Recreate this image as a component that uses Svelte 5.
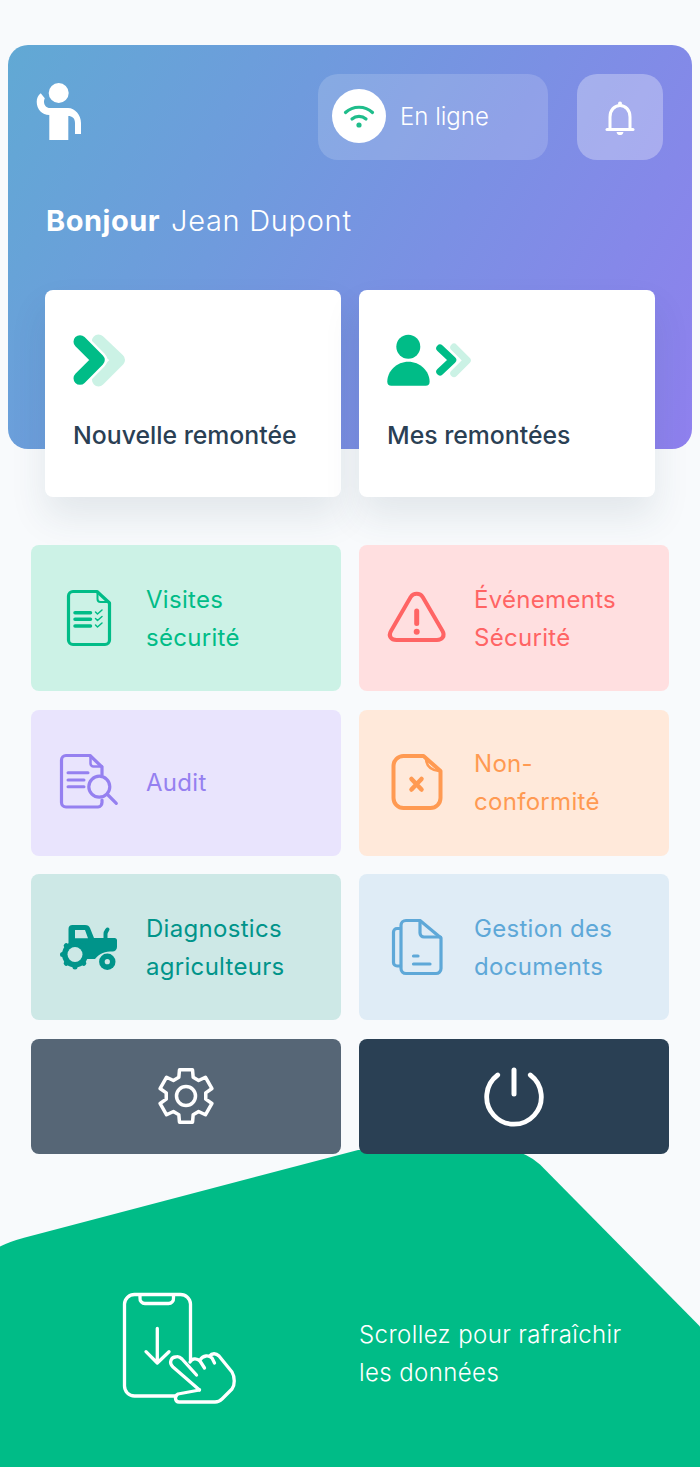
<script>
  const gearPath = (() => {
    const cx = 186, cy = 1096, pts = [];
    const p = (deg, r) => {
      const a = (deg * Math.PI) / 180;
      return `${(cx + r * Math.cos(a)).toFixed(2)} ${(cy + r * Math.sin(a)).toFixed(2)}`;
    };
    for (let i = 0; i < 6; i++) {
      const a = -90 + 60 * i;
      pts.push(p(a - 21, 20), p(a - 14, 27), p(a + 14, 27), p(a + 21, 20));
    }
    return 'M' + pts.join(' L') + ' Z';
  })();
</script>

<div class="page">
  <header class="hero">
    <div class="top">
      <svg class="person" viewBox="36 83 46 58" width="46" height="58" aria-hidden="true">
        <circle cx="58.7" cy="93" r="10" fill="#fff" />
        <path fill="#fff" d="M40.7 93.3 C38 95.5 36.7 98.5 36.7 101.7 C36.7 109 42 115 49.3 115 V140 H68.3 V116 C72 116 75 118 75 123 V134 H81 V123 C81 115 75 108 68 108 H50 C46.5 108 44 105 44 101.7 C44 100.5 44.2 99.3 44.8 98.3 Z" />
      </svg>
      <div class="status">
        <span class="dot">
          <svg viewBox="332 88 54 54" width="54" height="54" aria-hidden="true">
            <g fill="none" stroke="#1fbd8b" stroke-width="3.2" stroke-linecap="round">
              <path d="M345.5 111.5 C353 104.5 365 104.5 372.5 111.5" />
              <path d="M352 118 C356 114.5 362 114.5 366 118" />
            </g>
            <circle cx="359" cy="124" r="2.6" fill="#1fbd8b" />
          </svg>
        </span>
        <span class="online">En ligne</span>
      </div>
      <div class="bell">
        <svg viewBox="604 100 32 36" width="32" height="36" aria-hidden="true">
          <g fill="none" stroke="#fff" stroke-width="3" stroke-linecap="round" stroke-linejoin="round">
            <path d="M610 129 V117 C610 110 614.5 105.5 620 105.5 C625.5 105.5 630 110 630 117 V129" />
            <path d="M607 129.5 H633" />
          </g>
          <circle cx="620" cy="103.5" r="2" fill="#fff" />
          <path d="M616.5 132 H623.5 C623 134.5 621.5 135 620 135 C618.5 135 617 134.5 616.5 132 Z" fill="#fff" />
        </svg>
      </div>
    </div>

    <p class="hello"><strong>Bonjour</strong> <span>Jean Dupont</span></p>

    <div class="cards">
      <button class="card">
        <svg viewBox="72 334 56 54" width="56" height="54" aria-hidden="true">
          <g fill="none" stroke-linecap="round" stroke-linejoin="round">
            <path d="M98.5 341 L118.5 360 L98.5 380" stroke="#cbf2e5" stroke-width="13" />
            <path d="M80 341.7 L98.3 360 L80 378.3" stroke="#fff" stroke-width="18" />
            <path d="M80 341.7 L98.3 360 L80 378.3" stroke="#00bc87" stroke-width="13" />
          </g>
        </svg>
        <span>Nouvelle remontée</span>
      </button>
      <button class="card">
        <svg viewBox="386 334 88 54" width="88" height="54" aria-hidden="true">
          <circle cx="408.3" cy="346.7" r="12" fill="#00bc87" />
          <path fill="#00bc87" d="M391.3 385.7 H425.6 A4 4 0 0 0 429.6 381.7 C429.6 371 420 361.7 408.3 361.7 C396.8 361.7 387.3 371 387.3 381.7 A4 4 0 0 0 391.3 385.7 Z" />
          <g fill="none" stroke-linecap="round" stroke-linejoin="round">
            <path d="M454 347.3 L467 360.3 L454 373.3" stroke="#cbf2e5" stroke-width="7.5" />
            <path d="M440 348.3 L452.5 360 L440 371.7" stroke="#fff" stroke-width="10.5" />
            <path d="M440 348.3 L452.5 360 L440 371.7" stroke="#00bc87" stroke-width="7.5" />
          </g>
        </svg>
        <span>Mes remontées</span>
      </button>
    </div>
  </header>

  <main class="menu">
    <button class="tile green">
      <svg viewBox="55 586 92 64" width="92" height="64" aria-hidden="true">
        <g fill="none" stroke="currentColor" stroke-linejoin="round" stroke-linecap="round">
          <path stroke-width="3.2" d="M97 591.5 H73 A4.5 4.5 0 0 0 68.5 596 V640 A4.5 4.5 0 0 0 73 644.5 H105 A4.5 4.5 0 0 0 109.5 640 V603 Z" />
          <path stroke-width="2" d="M97.5 592 V599 A3 3 0 0 0 100.5 602 H109" />
          <path stroke-width="3.5" d="M75 612.7 H90.5 M75 619.3 H90.5 M75 626 H90.5" />
          <path stroke-width="1.5" d="M95.5 612 L97.5 614 L102 610 M95.5 618.5 L97.5 620.5 L102 616.5 M95.5 625 L97.5 627 L102 623" />
        </g>
      </svg>
      <span>Visites<br />sécurité</span>
    </button>
    <button class="tile red">
      <svg viewBox="383 586 92 64" width="92" height="64" aria-hidden="true">
        <g fill="none" stroke="currentColor" stroke-linecap="round" stroke-linejoin="round">
          <path stroke-width="4" d="M410.7 597 C413.5 592.7 420 592.7 422.7 597 L442.5 631 C445.5 636 442 640 437 640 H396.5 C391 640 388 636 391 631 Z" />
          <path stroke-width="5" d="M416.7 611 V623.5" />
        </g>
        <circle cx="416.7" cy="631.7" r="3" fill="currentColor" />
      </svg>
      <span>Événements<br />Sécurité</span>
    </button>
    <button class="tile purple">
      <svg viewBox="55 751 92 64" width="92" height="64" aria-hidden="true">
        <g fill="none" stroke="currentColor" stroke-linecap="round" stroke-linejoin="round">
          <path stroke-width="3.2" d="M102 775 V767 L90 755.5 H66 A4.5 4.5 0 0 0 61.5 760 V802.5 A4.5 4.5 0 0 0 66 807 H98 A4.5 4.5 0 0 0 102 802.5 V800" />
          <path stroke-width="2.5" d="M90.5 756 V763.5 A3 3 0 0 0 93.5 766.5 H102" />
          <path stroke-width="3" d="M68 772.7 H88 M68 780 H84 M68 786.7 H84" />
          <circle stroke-width="3.2" cx="99.3" cy="786.7" r="10.5" />
          <path stroke-width="3.2" d="M108 795 L116.3 803.3" />
        </g>
      </svg>
      <span>Audit</span>
    </button>
    <button class="tile orange">
      <svg viewBox="383 751 92 64" width="92" height="64" aria-hidden="true">
        <g fill="none" stroke="currentColor" stroke-linecap="round" stroke-linejoin="round">
          <path stroke-width="4" d="M423.5 756 H403.5 A10 10 0 0 0 393.5 766 V798 A10 10 0 0 0 403.5 808 H430.5 A10 10 0 0 0 440.5 798 V771 Z" />
          <path stroke-width="2.5" d="M426 758 C426 766 430 770 439 771" />
          <path stroke-width="4.5" d="M411.5 779 L421.5 789.5 M421.5 779 L411.5 789.5" />
        </g>
      </svg>
      <span>Non-<br />conformité</span>
    </button>
    <button class="tile teal">
      <svg viewBox="55 915 92 64" width="92" height="64" aria-hidden="true">
        <path fill="currentColor" fill-rule="evenodd" d="M68.5 944 V929 A4 4 0 0 1 72.5 925 H85 C88 925 89 926 90 928 L94 938 H114.5 A2.5 2.5 0 0 1 117 940.5 V947 A4.5 4.5 0 0 1 112.5 951.5 C105 951.5 100 953 95 959 H84 Z M75 930 V938.3 H88 L85 930 Z" />
        <path fill="none" stroke="currentColor" stroke-width="4" stroke-linecap="round" d="M105.5 938 V934 C105.5 932 106.5 931 107.5 929.5" />
        <g fill="currentColor">
          <circle cx="75" cy="954.5" r="13" />
          <g stroke="currentColor" stroke-width="5" stroke-linecap="round">
            <path d="M75 942 V967 M62.5 954.5 H87.5 M66.2 945.7 L83.8 963.3 M83.8 945.7 L66.2 963.3" />
          </g>
        </g>
        <circle cx="75" cy="954.5" r="7.5" fill="#cde8e6" />
        <circle cx="107.3" cy="961.7" r="8.2" fill="currentColor" />
        <circle cx="107.3" cy="961.7" r="2.6" fill="#cde8e6" />
      </svg>
      <span>Diagnostics<br />agriculteurs</span>
    </button>
    <button class="tile blue">
      <svg viewBox="383 915 92 64" width="92" height="64" aria-hidden="true">
        <g fill="none" stroke="currentColor" stroke-linecap="round" stroke-linejoin="round" stroke-width="3.2">
          <path d="M420 920.5 H406 A5 5 0 0 0 401 925.5 V968.5 A5 5 0 0 0 406 973.5 H436 A5 5 0 0 0 441 968.5 V938 Z" />
          <path d="M420 921 V933 A4 4 0 0 0 424 937 H440.5" />
          <path d="M400.5 928.5 H397 A3.5 3.5 0 0 0 393.5 932 V962.5 A3.5 3.5 0 0 0 397 966 H400.5" />
          <path d="M413.5 956 H418 M413.5 964 H430" />
        </g>
      </svg>
      <span>Gestion des<br />documents</span>
    </button>
    <button class="action slate" aria-label="Paramètres">
      <svg viewBox="154 1064 64 64" width="64" height="64" aria-hidden="true">
        <path d={gearPath} fill="none" stroke="#fff" stroke-width="3.5" stroke-linejoin="round" />
        <circle cx="186" cy="1096" r="9.5" fill="none" stroke="#fff" stroke-width="3.5" />
      </svg>
    </button>
    <button class="action navy" aria-label="Déconnexion">
      <svg viewBox="482 1064 64 64" width="64" height="64" aria-hidden="true">
        <g fill="none" stroke="#fff" stroke-linecap="round">
          <path stroke-width="4.8" d="M497.7 1075 A27.3 27.3 0 1 0 530.3 1075" />
          <path stroke-width="5" d="M514 1070 V1094" />
        </g>
      </svg>
    </button>
  </main>

  <footer class="refresh">
    <svg viewBox="120 1290 118 116" width="118" height="116" aria-hidden="true">
      <g fill="none" stroke="#fff" stroke-width="3.3" stroke-linecap="round" stroke-linejoin="round">
        <path d="M190.5 1360 V1304 A10 10 0 0 0 180.5 1294.5 H134.5 A10 10 0 0 0 124.5 1304 V1386 A10 10 0 0 0 134.5 1396 H176" />
        <path d="M140 1295 V1298 A5 5 0 0 0 145 1303.5 H168.5 A5 5 0 0 0 173.5 1298 V1295" />
        <path d="M157.3 1328.5 V1363 M146 1351.7 L157.3 1363 L169 1351.7" />
        <path d="M199.5 1390 L173 1367 C168 1362 172 1357 175.5 1357 C178 1356 180 1357 182 1359 L196.5 1375" />
        <path d="M190 1362 C192 1358 197 1358 200 1361 L204.5 1368" />
        <path d="M200 1360 C203 1355 209 1355 212 1358 L214.5 1363" />
        <path d="M209.5 1356 C212 1353 216 1353 219 1356 L232 1372 C235 1377 235 1385 232 1389 L222 1399 C220 1401 218 1402 215 1402 H179 C175 1402 174 1396 178 1394 L199.5 1390" />
      </g>
    </svg>
    <p>Scrollez pour rafraîchir<br />les données</p>
  </footer>
</div>

<style>
  :global(body) {
    margin: 0;
    background: #f8fafc;
  }
  .page {
    width: 700px;
    height: 1467px;
    overflow: hidden;
    padding-top: 45px;
    box-sizing: border-box;
    font-family: Inter, "Open Sans", "Liberation Sans", sans-serif;
    background: #f8fafc;
  }
  svg {
    display: block;
    flex: none;
  }
  button {
    border: 0;
    font: inherit;
    text-align: left;
    padding: 0;
  }
  .hero {
    height: 404px;
    margin: 0 8px;
    border-radius: 20px;
    box-sizing: border-box;
    padding: 29px 29px 0;
    background: linear-gradient(120deg, #61a9d4 0%, #6f9bdd 35%, #7b90e4 60%, #8f80ee 100%);
  }
  .top {
    display: flex;
    align-items: flex-start;
    height: 86px;
  }
  .person {
    margin: 9px 0 0 -1px;
  }
  .status {
    display: flex;
    align-items: center;
    gap: 14px;
    width: 230px;
    height: 86px;
    box-sizing: border-box;
    padding-left: 14px;
    margin-left: 236px;
    border-radius: 20px;
    background: rgba(255, 255, 255, 0.16);
  }
  .dot {
    width: 54px;
    height: 54px;
    margin-bottom: 3px;
    border-radius: 50%;
    background: #fff;
  }
  .online {
    margin-bottom: 2px;
    color: #fff;
    font-size: 24px;
    font-weight: 300;
  }
  .bell {
    display: flex;
    align-items: center;
    justify-content: center;
    width: 86px;
    height: 86px;
    margin-left: 29px;
    border-radius: 20px;
    background: rgba(255, 255, 255, 0.3);
  }
  .bell svg {
    margin-top: 2px;
  }
  .hello {
    display: flex;
    gap: 11px;
    margin: 41px 0 0 9px;
    color: #fff;
    font-size: 29px;
    line-height: 40px;
  }
  .hello strong {
    font-weight: 700;
    letter-spacing: 0.5px;
  }
  .hello span {
    font-weight: 300;
    letter-spacing: 0.7px;
  }
  .cards {
    display: flex;
    gap: 18px;
    margin: 49px 0 0 8px;
  }
  .card {
    display: flex;
    flex-direction: column;
    width: 296px;
    height: 207px;
    box-sizing: border-box;
    padding: 44px 0 0 27px;
    background: #fff;
    border-radius: 8px;
    box-shadow: 0 20px 36px rgba(42, 64, 84, 0.1);
    color: #2a4054;
    font-size: 24.8px;
    font-weight: 500;
  }
  .card span {
    margin: 29px 0 0 1px;
    line-height: 36px;
  }
  .menu {
    position: relative;
    z-index: 1;
    display: grid;
    grid-template-columns: 310px 310px;
    grid-template-rows: 146px 146px 146px 115px;
    gap: 18.5px 18px;
    margin: 96px 0 0 31px;
  }
  .tile {
    display: flex;
    align-items: center;
    padding-left: 24px;
    border-radius: 8px;
    font-size: 24px;
    line-height: 38px;
    letter-spacing: 0.3px;
  }
  .tile span {
    margin: 1px 0 0 -1px;
  }
  .action {
    display: flex;
    align-items: center;
    justify-content: center;
    border-radius: 8px;
  }
  .green { background: #ccf2e6; color: #00bc87; }
  .red { background: #ffdfe0; color: #ff6464; }
  .purple { background: #e9e4fd; color: #9580f0; }
  .orange { background: #ffe9da; color: #ff9a52; }
  .teal { background: #cde8e6; color: #00948a; }
  .blue { background: #dfecf6; color: #5ea8d8; }
  .slate { background: #566676; }
  .navy { background: #2a4054; }
  .refresh {
    display: flex;
    gap: 121px;
    height: 318px;
    margin-top: -4px;
    box-sizing: border-box;
    padding: 140px 0 0 120px;
    background: #00bc87;
    clip-path: path("M0 97 Q10 92 25 88 L360 0 H510 Q528 4 540 15 L700 177 V318 H0 Z");
  }
  .refresh p {
    margin: 26px 0 0;
    color: #fff;
    font-size: 24px;
    font-weight: 300;
    line-height: 38px;
    letter-spacing: 0.4px;
  }
</style>
